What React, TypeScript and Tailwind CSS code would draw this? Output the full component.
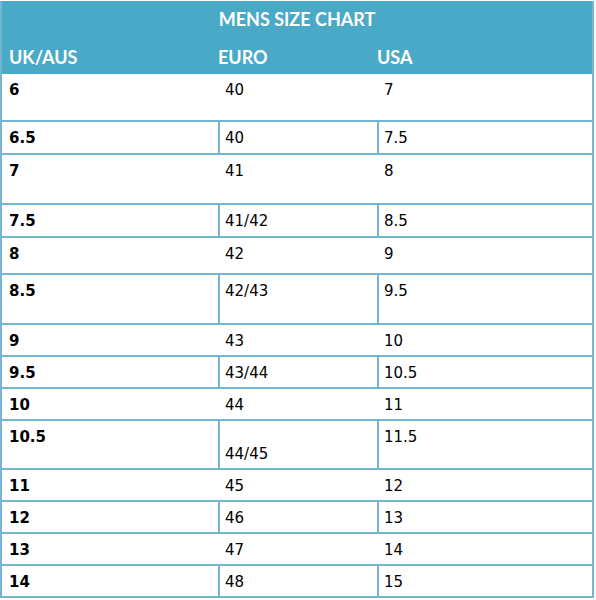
const rows: { uk: string; eu: string; us: string; h: string; lined: boolean; euLow?: boolean }[] = [
  { uk: "6", eu: "40", us: "7", h: "h-[48px]", lined: false },
  { uk: "6.5", eu: "40", us: "7.5", h: "h-[33px]", lined: true },
  { uk: "7", eu: "41", us: "8", h: "h-[50px]", lined: false },
  { uk: "7.5", eu: "41/42", us: "8.5", h: "h-[33px]", lined: true },
  { uk: "8", eu: "42", us: "9", h: "h-[37px]", lined: false },
  { uk: "8.5", eu: "42/43", us: "9.5", h: "h-[50px]", lined: true },
  { uk: "9", eu: "43", us: "10", h: "h-[32px]", lined: false },
  { uk: "9.5", eu: "43/44", us: "10.5", h: "h-[32px]", lined: true },
  { uk: "10", eu: "44", us: "11", h: "h-[32px]", lined: false },
  { uk: "10.5", eu: "44/45", us: "11.5", h: "h-[49px]", lined: true, euLow: true },
  { uk: "11", eu: "45", us: "12", h: "h-[32px]", lined: false },
  { uk: "12", eu: "46", us: "13", h: "h-[32px]", lined: true },
  { uk: "13", eu: "47", us: "14", h: "h-[32px]", lined: false },
  { uk: "14", eu: "48", us: "15", h: "h-[32px]", lined: true },
];

export default function App() {
  return (
    <div className="w-[596px] h-[600px] bg-white pt-px">
      <div className="w-[594px] border-l-2 border-r-2 border-[#74b6d1]">
        {/* header */}
        <div className="bg-[#4aa9c6] h-[73px] text-white font-bold font-['Lato','Liberation_Sans',sans-serif]">
          <div className="h-[38px] pt-[8px] text-center text-[18px] leading-5">MENS SIZE CHART</div>
          <div className="flex text-[18px] leading-5 pt-[8px]">
            <div className="w-[216px] pl-[7px]">UK/AUS</div>
            <div className="w-[159px]">EURO</div>
            <div className="flex-1">USA</div>
          </div>
        </div>

        {/* rows */}
        <div className="font-['DejaVu_Sans','Liberation_Sans',sans-serif] text-[15px] leading-5 text-black">
          {rows.map((r) => (
            <div key={r.uk} className={`flex border-b-2 border-[#74b6d1] ${r.h}`}>
              <div className="w-[216px] pl-[7px] pt-[6px] font-bold">{r.uk}</div>
              <div
                className={`w-[159px] pt-[6px] ${r.lined ? "border-l-2 border-[#74b6d1] pl-[5px]" : "pl-[7px]"} ${
                  r.euLow ? "flex items-end pb-[4px]" : ""
                }`}
              >
                {r.eu}
              </div>
              <div className={`flex-1 pt-[6px] ${r.lined ? "border-l-2 border-[#74b6d1] pl-[5px]" : "pl-[7px]"}`}>
                {r.us}
              </div>
            </div>
          ))}
        </div>
      </div>
    </div>
  );
}
